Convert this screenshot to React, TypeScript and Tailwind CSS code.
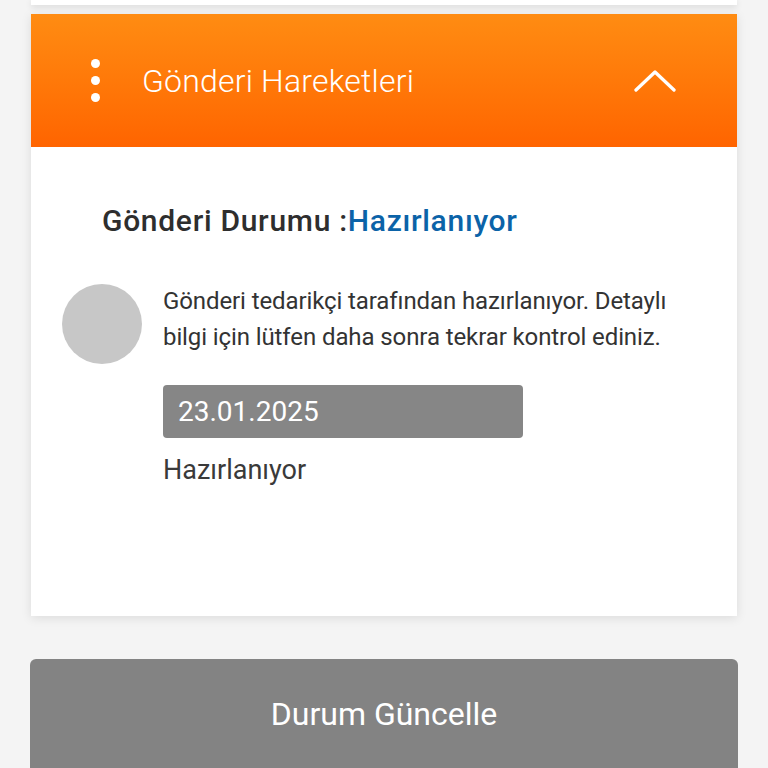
export default function App() {
  return (
    <div
      className="h-[768px] w-[768px] overflow-hidden bg-[#f4f4f4]"
      style={{ fontFamily: 'Roboto, "Noto Sans", sans-serif' }}
    >
      <div className="mx-[31px] h-[5px] bg-white shadow-[0_2px_6px_rgba(0,0,0,0.12)]" />

      <div className="mx-[31px] mt-[9px] bg-white shadow-[0_2px_10px_rgba(0,0,0,0.10)]">
        <div className="flex h-[133px] items-center bg-gradient-to-b from-[#ff8c12] to-[#ff6400] pl-[57px] pr-[61px]">
          <div className="flex w-[14px] flex-col items-center gap-[8px]">
            <span className="h-[9px] w-[9px] rounded-full bg-white" />
            <span className="h-[9px] w-[9px] rounded-full bg-white" />
            <span className="h-[9px] w-[9px] rounded-full bg-white" />
          </div>
          <div className="ml-[40px] flex-1 text-[32px] font-light tracking-[0.2px] text-white">
            Gönderi Hareketleri
          </div>
          <svg width="42" height="22" viewBox="0 0 42 22" fill="none">
            <polyline
              points="2,20 21,2 40,20"
              stroke="white"
              strokeWidth="3.3"
              strokeLinecap="round"
              strokeLinejoin="round"
            />
          </svg>
        </div>

        <div className="h-[469px] pt-[51px] pl-[71px]">
          <div className="text-[30px] font-medium tracking-[0.7px] text-[#2e2e2e]">
            Gönderi Durumu :<span className="text-[#0b63a8]">Hazırlanıyor</span>
          </div>

          <div className="mt-[40px] flex -ml-[40px]">
            <div className="mt-[1px] h-[80px] w-[80px] shrink-0 rounded-full bg-[#c7c7c7]" />
            <div className="ml-[21px]">
              <p className="w-[540px] text-[24px] leading-[36px] tracking-[-0.1px] text-[#333]">
                Gönderi tedarikçi tarafından hazırlanıyor. Detaylı bilgi için lütfen daha sonra tekrar kontrol ediniz.
              </p>
              <div className="mt-[30px] flex h-[53px] w-[360px] items-center rounded-[4px] bg-[#868686] pl-[15px] text-[28px] text-white">
                23.01.2025
              </div>
              <div className="mt-[12px] text-[27px] text-[#3a3a3a]">Hazırlanıyor</div>
            </div>
          </div>
        </div>
      </div>

      <button className="mx-[30px] mt-[43px] flex h-[120px] w-[708px] items-start justify-center rounded-[6px] bg-[#838383] pt-[31px] text-[32px] text-white">
        Durum Güncelle
      </button>
    </div>
  )
}
